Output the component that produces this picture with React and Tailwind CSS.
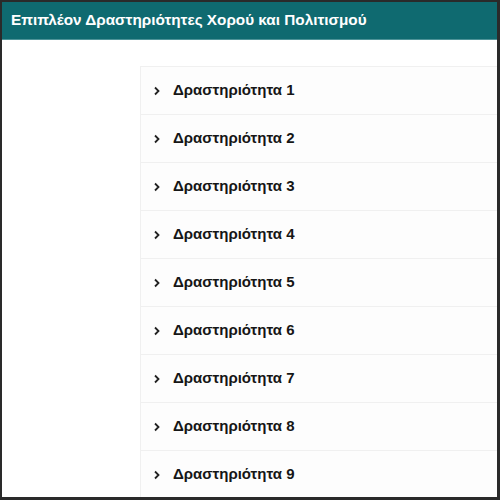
import React from "react";

const items = [1, 2, 3, 4, 5, 6, 7, 8, 9];

function Chevron() {
  return (
    <svg width="8" height="10" viewBox="0 0 8 10" className="shrink-0">
      <path d="M2 1.5 L5.5 5 L2 8.5" fill="none" stroke="#222" strokeWidth="1.8" />
    </svg>
  );
}

export default function App() {
  return (
    <div
      className="w-[500px] h-[500px] overflow-hidden bg-white border-l-2 border-t-2 border-r-[3px] border-b-[3px] border-[#2a2a2a] flex flex-col"
      style={{ fontFamily: '"Liberation Sans", Arial, sans-serif' }}
    >
      <div className="h-[38px] shrink-0 bg-[#0f6a70] border-b border-[#4d9398] flex items-center px-[9px]">
        <span className="text-white text-[15.3px] font-bold">Επιπλέον Δραστηριότητες Χορού και Πολιτισμού</span>
      </div>
      <div className="ml-[138px] mt-[26px] flex-1 bg-[#fdfdfd] border border-[#f0f0f0] border-r-0">
        {items.map((n) => (
          <div key={n} className="h-[48px] flex items-center gap-[12px] pl-[12px] border-b border-[#f0f0f0]">
            <Chevron />
            <span className="text-[15px] font-bold text-[#161616]">Δραστηριότητα {n}</span>
          </div>
        ))}
      </div>
    </div>
  );
}
